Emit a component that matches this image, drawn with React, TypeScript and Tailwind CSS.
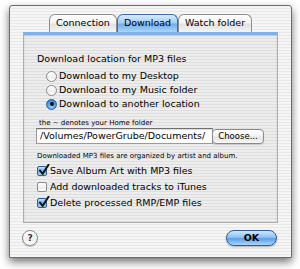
import React from "react";

const font = "font-['DejaVu_Sans','Noto_Sans',sans-serif]";
const stripes =
  "bg-[repeating-linear-gradient(180deg,#f6f6f6_0px,#f6f6f6_2px,#e7e7e7_2px,#e7e7e7_3px)]";

function Tab({ label, active, width }: { label: string; active?: boolean; width: string }) {
  return (
    <div
      className={`flex h-[18px] items-center justify-center rounded-t-[6px] border border-b-0 text-[9.5px] text-black ${width} ${
        active
          ? "border-[#3c6cb0] bg-[linear-gradient(180deg,#d8ebfd_0%,#a4cdf6_45%,#73aeea_55%,#aad5fb_100%)]"
          : "border-[#8e8e8e] bg-[linear-gradient(180deg,#ffffff_0%,#f3f3f3_45%,#e2e2e2_55%,#f4f4f4_100%)]"
      }`}
    >
      {label}
    </div>
  );
}

function Radio({ label, checked }: { label: string; checked?: boolean }) {
  return (
    <div className="flex h-[14px] items-center gap-[2px] pl-[22px]">
      <span
        className={`flex h-[11px] w-[11px] items-center justify-center rounded-full border ${
          checked
            ? "border-[#2f5f9f] bg-[radial-gradient(circle_at_50%_70%,#9dd0fa_0%,#4c93e0_60%,#2d6cc0_100%)]"
            : "border-[#8a8a8a] bg-[linear-gradient(180deg,#ffffff_0%,#eeeeee_60%,#ffffff_100%)]"
        }`}
      >
        {checked && <span className="h-[4px] w-[4px] rounded-full bg-[#111]" />}
      </span>
      <span className="text-[9.5px] leading-none text-black">{label}</span>
    </div>
  );
}

function Check({ label, checked }: { label: string; checked?: boolean }) {
  return (
    <div className="flex h-[16px] items-center gap-[3px] pl-[13px]">
      <span
        className={`relative h-[10px] w-[10px] rounded-[2px] border ${
          checked
            ? "border-[#2f5f9f] bg-[linear-gradient(180deg,#c3e0fb_0%,#6aa9ea_50%,#a9d4fb_100%)]"
            : "border-[#8a8a8a] bg-[linear-gradient(180deg,#ffffff_0%,#ececec_60%,#ffffff_100%)]"
        }`}
      >
        {checked && (
          <svg viewBox="0 0 12 12" className="absolute left-[0px] top-[-3px] h-[12px] w-[12px]">
            <path d="M2 6.5 L4.6 10 L10.5 0.8" fill="none" stroke="#111" strokeWidth="2" strokeLinecap="round" strokeLinejoin="round" />
          </svg>
        )}
      </span>
      <span className="text-[9.5px] leading-none text-black">{label}</span>
    </div>
  );
}

export default function App() {
  return (
    <div className={`h-[269px] w-[300px] bg-white pl-[9px] pt-[5px] ${font}`}>
      <div
        className={`h-[253px] w-[283px] rounded-t-[3px] border border-[#6b6b6b] shadow-[0_4px_9px_rgba(0,0,0,0.55)] ${stripes}`}
      >
        <div className="flex justify-center pt-[8px]">
          <Tab label="Connection" width="w-[68px]" />
          <Tab label="Download" width="w-[61px]" active />
          <Tab label="Watch folder" width="w-[74px]" />
        </div>
        <div className="mx-[13px] h-[191px] border border-t-[3px] border-[#acacac] border-t-[#7fb1e8] bg-[rgba(0,0,0,0.035)] shadow-[inset_0_1px_2px_rgba(0,0,0,0.12)]">
          <div className="pl-[13px] pt-[18px] text-[9.5px] leading-[12px] text-black">Download location for MP3 files</div>
          <div className="mt-[4px]">
            <Radio label="Download to my Desktop" />
            <Radio label="Download to my Music folder" />
            <Radio label="Download to another location" checked />
          </div>
          <div className="mt-[8px] pl-[15px] text-[7px] leading-[9px] text-black">the ~ denotes your Home folder</div>
          <div className="flex items-center gap-[0px] pl-[12px]">
            <div className="flex h-[16px] w-[177px] items-center overflow-hidden whitespace-nowrap border border-[#9a9a9a] border-t-[#6f6f6f] bg-white pl-[3px] text-[9.5px] text-black shadow-[inset_0_1px_1px_rgba(0,0,0,0.15)]">
              /Volumes/PowerGrube/Documents/
            </div>
            <div className="ml-[-1px] flex h-[15px] w-[52px] items-center justify-center rounded-[4px] border border-[#8a8a8a] bg-[linear-gradient(180deg,#ffffff_0%,#f2f2f2_45%,#e3e3e3_55%,#f7f7f7_100%)] text-[8.5px] text-black shadow-[0_1px_1px_rgba(0,0,0,0.15)]">
              Choose...
            </div>
          </div>
          <div className="mt-[7px] pl-[13px] text-[7px] leading-[10px] text-black">
            Downloaded MP3 files are organized by artist and album.
          </div>
          <div className="mt-[2px]">
            <Check label="Save Album Art with MP3 files" checked />
            <Check label="Add downloaded tracks to iTunes" />
            <Check label="Delete processed RMP/EMP files" checked />
          </div>
        </div>
        <div className="flex items-center justify-between pl-[12px] pr-[14px] pt-[7px]">
          <div className="flex h-[16px] w-[16px] items-center justify-center rounded-full border border-[#8a8a8a] bg-[linear-gradient(180deg,#ffffff_0%,#efefef_60%,#ffffff_100%)] text-[9px] font-bold leading-none text-[#333] shadow-[0_1px_1px_rgba(0,0,0,0.2)]">
            ?
          </div>
          <div className="flex h-[16px] w-[51px] items-center justify-center rounded-full border border-[#2d5c9c] bg-[linear-gradient(180deg,#cfe6fd_0%,#8ec2f4_45%,#5c9fe6_55%,#a9d7fd_100%)] text-[9.5px] font-bold leading-none text-black shadow-[0_1px_2px_rgba(0,0,0,0.3)]">
            OK
          </div>
        </div>
      </div>
    </div>
  );
}
